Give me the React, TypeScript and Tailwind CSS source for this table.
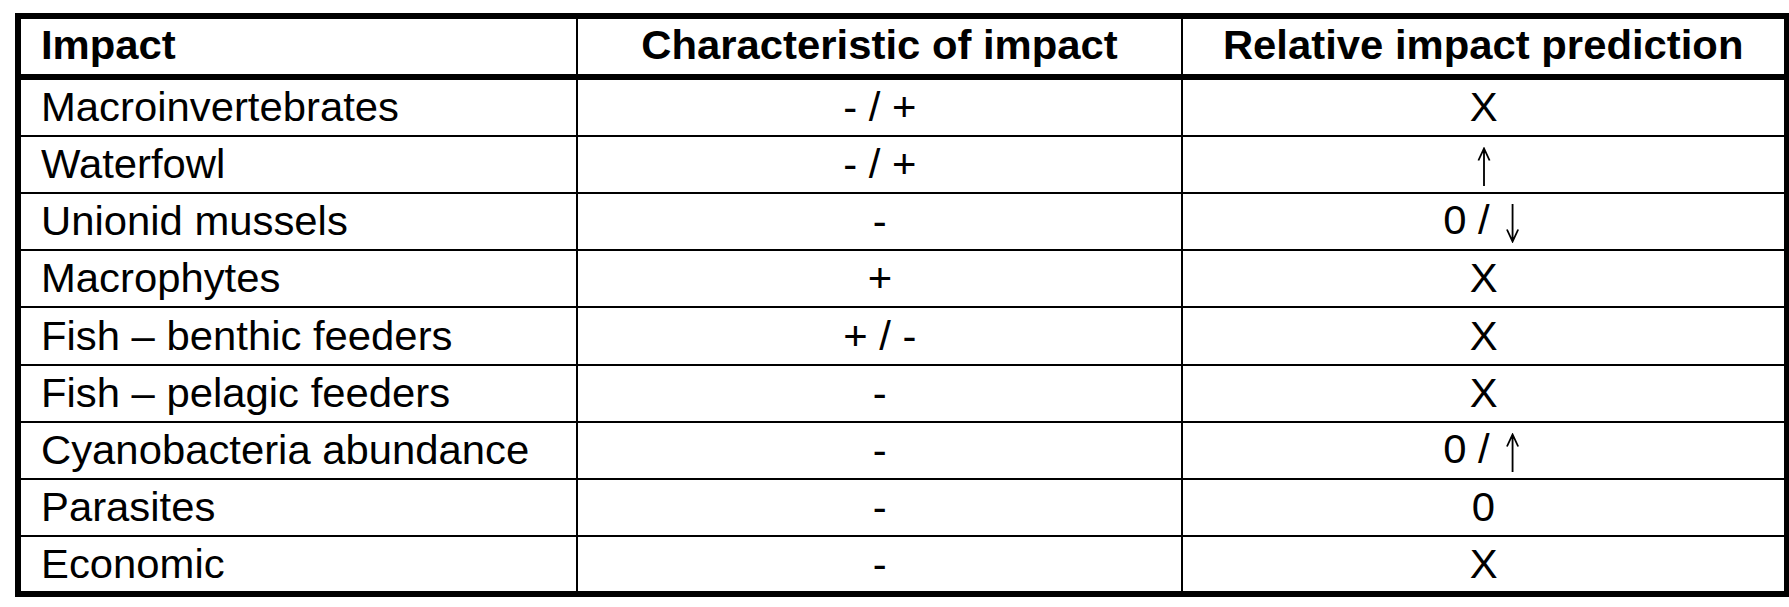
import React from "react";

type Cell = string;

const rows: [string, string, Cell][] = [
  ["Macroinvertebrates", "- / +", "X"],
  ["Waterfowl", "- / +", "UP"],
  ["Unionid mussels", "-", "0 / DOWN"],
  ["Macrophytes", "+", "X"],
  ["Fish \u2013 benthic feeders", "+ / -", "X"],
  ["Fish \u2013 pelagic feeders", "-", "X"],
  ["Cyanobacteria abundance", "-", "0 / UP"],
  ["Parasites", "-", "0"],
  ["Economic", "-", "X"],
];

const rowHeights = [
  "h-[55px]",
  "h-[55px]",
  "h-[55px]",
  "h-[55px]",
  "h-[56px]",
  "h-[55px]",
  "h-[55px]",
  "h-[55px]",
  "h-[54px]",
];

function Arrow({ dir }: { dir: "up" | "down" }) {
  return (
    <svg
      width="22"
      height="39"
      viewBox="0 0 22 39"
      className="inline-block align-[-9px]"
    >
      {dir === "up" ? (
        <path
          d="M11 1.5 V39 M5.5 13.5 L11 1.5 L16.5 13.5"
          stroke="black"
          strokeWidth="1.8"
          fill="none"
        />
      ) : (
        <path
          d="M11 0 V37.5 M5.5 25.5 L11 37.5 L16.5 25.5"
          stroke="black"
          strokeWidth="1.8"
          fill="none"
        />
      )}
    </svg>
  );
}

function Prediction({ v }: { v: string }) {
  if (v === "UP") return <Arrow dir="up" />;
  if (v === "0 / UP")
    return (
      <>
        {"0 / "}
        <Arrow dir="up" />
      </>
    );
  if (v === "0 / DOWN")
    return (
      <>
        {"0 / "}
        <Arrow dir="down" />
      </>
    );
  return <>{v}</>;
}

export default function App() {
  return (
    <div className="w-[1789px] h-[607px] overflow-hidden bg-white pt-[13px] pl-[15px] font-['Liberation_Sans',Arial,sans-serif] text-black">
      <div className="w-[1774px] border-t-[6px] border-b-[6px] border-l-[6px] border-r-[5px] border-black bg-black">
        <div className="grid grid-cols-[555px_603px_601px] gap-x-[2px] gap-y-[2px]">
          {/* header */}
          <div className="h-[59px] bg-white border-b-4 border-black flex items-center pl-[20px] pb-[3px]">
            <span className="inline-block whitespace-nowrap origin-left scale-x-[1.02] text-[41px] leading-none font-bold">
              Impact
            </span>
          </div>
          <div className="h-[59px] bg-white border-b-4 border-black flex items-center justify-center pb-[3px]">
            <span className="inline-block whitespace-nowrap origin-center scale-x-[1.02] text-[41px] leading-none font-bold">
              Characteristic of impact
            </span>
          </div>
          <div className="h-[59px] bg-white border-b-4 border-black flex items-center justify-center pb-[3px]">
            <span className="inline-block whitespace-nowrap origin-center scale-x-[1.02] text-[41px] leading-none font-bold">
              Relative impact prediction
            </span>
          </div>

          {rows.map((r, i) => (
            <React.Fragment key={i}>
              <div
                className={`${rowHeights[i]} bg-white flex items-center pl-[20px]`}
              >
                <span className="inline-block whitespace-nowrap origin-left scale-x-[1.02] text-[41px] leading-none">
                  {r[0]}
                </span>
              </div>
              <div
                className={`${rowHeights[i]} bg-white flex items-center justify-center`}
              >
                <span className="inline-block whitespace-pre origin-center scale-x-[1.02] text-[41px] leading-none">
                  {r[1]}
                </span>
              </div>
              <div
                className={`${rowHeights[i]} bg-white flex items-center justify-center`}
              >
                <span className="inline-block whitespace-pre origin-center scale-x-[1.02] text-[41px] leading-none">
                  <Prediction v={r[2]} />
                </span>
              </div>
            </React.Fragment>
          ))}
        </div>
      </div>
    </div>
  );
}
